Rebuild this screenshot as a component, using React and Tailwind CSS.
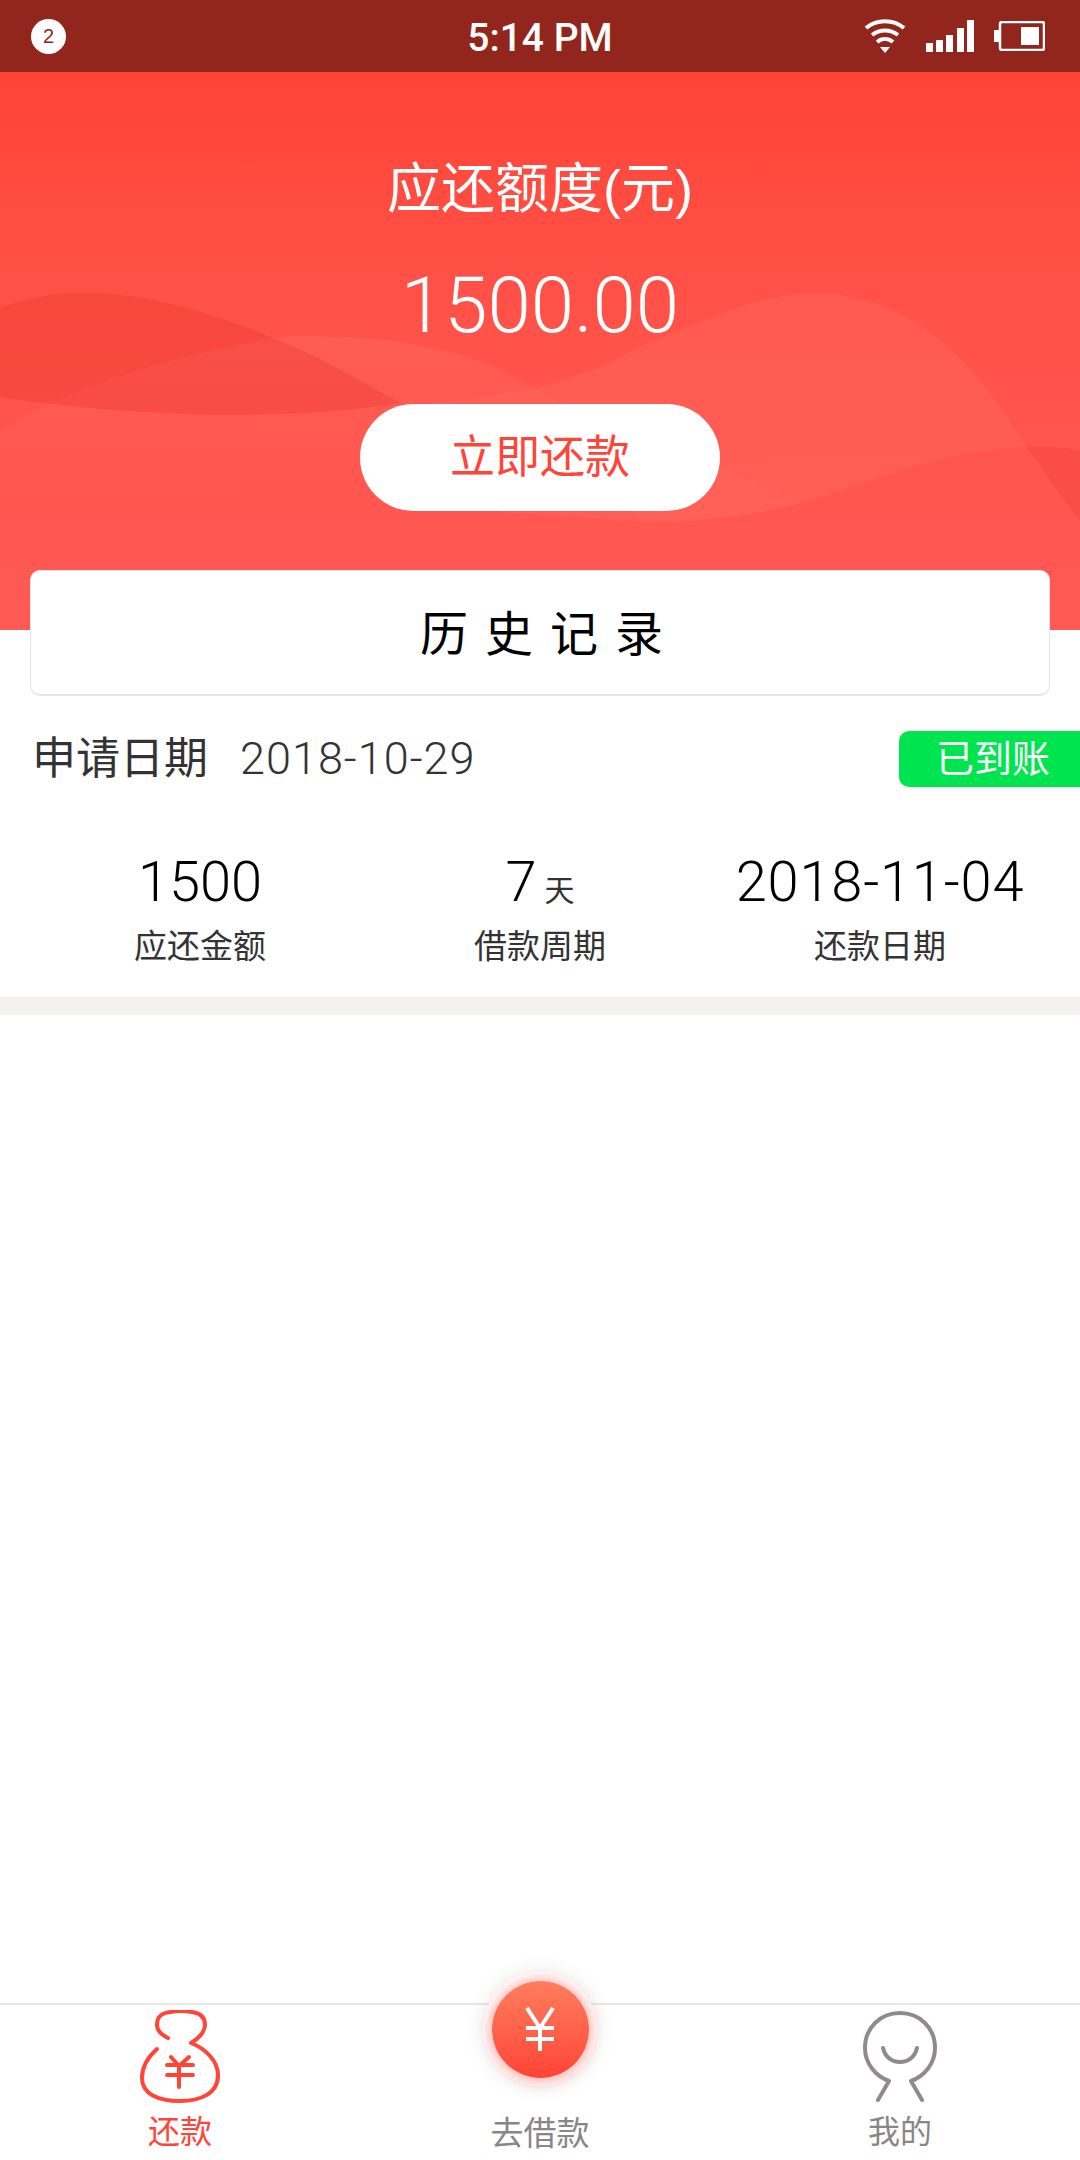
const cjk = "font-['Liberation_Sans','Noto_Sans_CJK_SC',sans-serif]";
const num = "font-['Roboto','Noto_Sans_CJK_SC',sans-serif] font-light";

function Waves() {
  return (
    <svg className="absolute left-0 top-0 w-full h-full" viewBox="0 0 1080 558" preserveAspectRatio="none" fill="none">
      <defs>
        <linearGradient id="hg" x1="0" y1="0" x2="0" y2="1">
          <stop offset="0" stopColor="#ff4336" />
          <stop offset="0.34" stopColor="#ff5046" />
          <stop offset="1" stopColor="#ff5a55" />
        </linearGradient>
        <linearGradient id="lh" gradientUnits="userSpaceOnUse" x1="0" y1="265" x2="0" y2="445">
          <stop offset="0" stopColor="#ff6a62" stopOpacity="0.45" />
          <stop offset="1" stopColor="#ff6a62" stopOpacity="0" />
        </linearGradient>
      </defs>
      <rect width="1080" height="558" fill="url(#hg)" />
      <path d="M0 358C43 331 133 291 273 266C300 263 315 265 333 265C370 265 410 270 440 278C480 285 520 305 560 332V445H0Z" fill="url(#lh)" />
      <path d="M405 333C460 330 510 322 551 312C585 302 615 288 640 275C700 250 760 221 813 221C850 221 890 232 923 255C950 275 970 295 990 321C1005 340 1015 358 1027 375C1000 376 970 380 940 388C890 400 850 418 800 431C750 445 700 450 640 450L500 440Z" fill="#ff6a5c" opacity="0.42" />
      <path d="M720 395C745 405 770 418 800 431C750 445 700 450 640 450L600 400Z" fill="#ff6a62" opacity="0.25" />
      <path d="M0 236C25 226 55 221 83 221C115 221 140 225 167 231C205 240 240 252 273 266C320 285 360 308 400 331C340 341 280 343 217 343C155 342 95 337 43 331C28 329 14 327 0 325Z" fill="#ec3a30" opacity="0.38" />
      <path d="M1027 375C1045 374 1065 375 1080 379V448C1060 425 1045 400 1027 375Z" fill="#f0403c" opacity="0.4" />
    </svg>
  );
}

function Stat({ value, unit, label, spaced }) {
  return (
    <div className="flex flex-col items-center">
      <div className={`${num} h-[66px] text-[56px] leading-[66px] text-black flex items-baseline ${spaced ? "tracking-[0.8px]" : ""}`}>
        {value}
        {unit && <span className={`${cjk} font-normal text-[30px] leading-[30px] text-[#333] ml-2`}>{unit}</span>}
      </div>
      <div className={`${cjk} text-[33px] leading-[44px] text-[#333] mt-[10px]`}>{label}</div>
    </div>
  );
}

function Bag() {
  return (
    <svg width="80" height="93" viewBox="0 0 80 93" fill="none" stroke="#ff4438" strokeWidth="4" strokeLinecap="round" strokeLinejoin="round">
      <path d="M28 28C22 25 17 20 17 15C17 6 22 3 30 2C36 1 46 1 52 2C60 3 65 7 65 15C65 22 58 29 51 33C64 38 78 50 78 65C78 84 60 91 40 91C18 91 2 84 2 68C2 57 8 47 17 39" />
      <path d="M31 47L39 56L49 47M27 55H53M27 65H53M39 56V77" />
    </svg>
  );
}

function Me() {
  return (
    <svg width="74" height="92" viewBox="0 0 74 92" fill="none" stroke="#8f8b8a" strokeWidth="4" strokeLinecap="round" strokeLinejoin="round">
      <path d="M15 89L26 70C12 65 2 52 2 37C2 17 17 2 37 2C57 2 72 17 72 37C72 52 62 65 48 70L59 89" />
      <path d="M20 37C22 46 29 51 37 51C45 51 52 46 54 37" />
    </svg>
  );
}

export default function App() {
  return (
    <div className={`${cjk} relative w-[1080px] h-[2160px] bg-white overflow-hidden flex flex-col`}>
      <div className="h-[72px] bg-[#92261d] flex items-center justify-between pl-[31px] pr-[35px] relative shrink-0">
        <div className="w-[35px] h-[35px] rounded-full bg-white flex items-center justify-center text-[#92261d] text-[20px] font-medium">2</div>
        <div className="absolute left-0 right-0 top-[2px] h-[72px] flex items-center justify-center text-white text-[39px] font-['Roboto',sans-serif] font-medium">5:14 PM</div>
        <div className="flex items-center">
          <svg width="42" height="34" viewBox="0 0 42 34" className="mr-[20px]" fill="none" stroke="white" strokeWidth="4">
            <path d="M2 9C13 0 29 0 40 9M8 16C16 10 26 10 34 16M13 23C18 19 24 19 29 23" />
            <path d="M16 28H26L21 34Z" fill="white" stroke="none" />
          </svg>
          <svg width="48" height="32" viewBox="0 0 48 32" className="mr-[20px]" fill="white">
            <rect x="0" y="23" width="7" height="9" />
            <rect x="10" y="20" width="7" height="12" />
            <rect x="20" y="15" width="7" height="17" />
            <rect x="31" y="8" width="7" height="24" />
            <rect x="41" y="0" width="7" height="32" />
          </svg>
          <svg width="51" height="30" viewBox="0 0 51 30" fill="none">
            <rect x="0" y="9" width="5" height="12" fill="white" />
            <rect x="6" y="1" width="44" height="28" rx="2" stroke="white" strokeWidth="2.5" />
            <rect x="27" y="6" width="18" height="18" fill="white" />
          </svg>
        </div>
      </div>

      <div className="relative h-[558px] shrink-0 flex flex-col items-center">
        <Waves />
        <div className="relative text-white text-[54px] leading-[64px] mt-[85px]">应还额度(元)</div>
        <div className={`${num} relative text-white text-[78px] leading-[90px] mt-[40px]`}>1500.00</div>
        <div className="relative w-[360px] h-[107px] rounded-full bg-white flex items-center justify-center text-[#ff4438] text-[45px] mt-[53px]">立即还款</div>
      </div>

      <div className="relative -mt-[60px] mx-[30px] h-[126px] bg-white rounded-[10px] border border-[#e6e6e6] border-b-2 flex items-center justify-center pl-[20px] pt-[4px] text-black text-[48px] tracking-[17px] shrink-0">
        历史记录
      </div>

      <div className="relative flex items-center justify-between h-[56px] mt-[35px] shrink-0">
        <div className="flex items-center pl-[32px] text-[#333]">
          <span className="text-[44px]">申请日期</span>
          <span className={`${num} text-[45px] tracking-[1px] ml-[32px]`}>2018-10-29</span>
        </div>
        <div className="w-[181px] h-[56px] bg-[#00e450] rounded-l-[10px] flex items-center justify-end pr-[30px] text-white text-[38px]">已到账</div>
      </div>

      <div className="grid grid-cols-3 px-[30px] mt-[62px] shrink-0">
        <Stat value="1500" label="应还金额" />
        <Stat value="7" unit="天" label="借款周期" />
        <Stat value="2018-11-04" label="还款日期" spaced />
      </div>

      <div className="h-[18px] bg-[#f3f2f0] mt-[28px] shrink-0" />
      <div className="flex-1" />

      <div className="relative h-[157px] border-t-2 border-[#e6e6e6] grid grid-cols-3 shrink-0">
        <div className="flex flex-col items-center pt-[5px]">
          <Bag />
          <span className="text-[32px] leading-[40px] text-[#ff4438] mt-[9px]">还款</span>
        </div>
        <div className="flex flex-col items-center pt-[109px]">
          <span className="text-[33px] leading-[40px] text-[#8a8685]">去借款</span>
        </div>
        <div className="flex flex-col items-center pt-[6px]">
          <Me />
          <span className="text-[32px] leading-[40px] text-[#8a8685] mt-[9px]">我的</span>
        </div>

        <div className="absolute left-[483px] top-[-33px] w-[114px] h-[114px] rounded-full bg-white shadow-[0_0_14px_7px_rgba(205,205,200,0.2)] flex items-center justify-center">
          <div className="w-[97px] h-[97px] rounded-full bg-gradient-to-b from-[#ff7c5e] to-[#ff4235] shadow-[0_1px_10px_5px_rgba(255,70,60,0.33)] flex items-center justify-center">
            <svg width="30" height="44" viewBox="0 0 30 44" fill="none" stroke="white" strokeWidth="4">
              <path d="M2 1L15 21L28 1M1 21H29M1 32H29M15 21V44" />
            </svg>
          </div>
        </div>
      </div>
    </div>
  );
}
